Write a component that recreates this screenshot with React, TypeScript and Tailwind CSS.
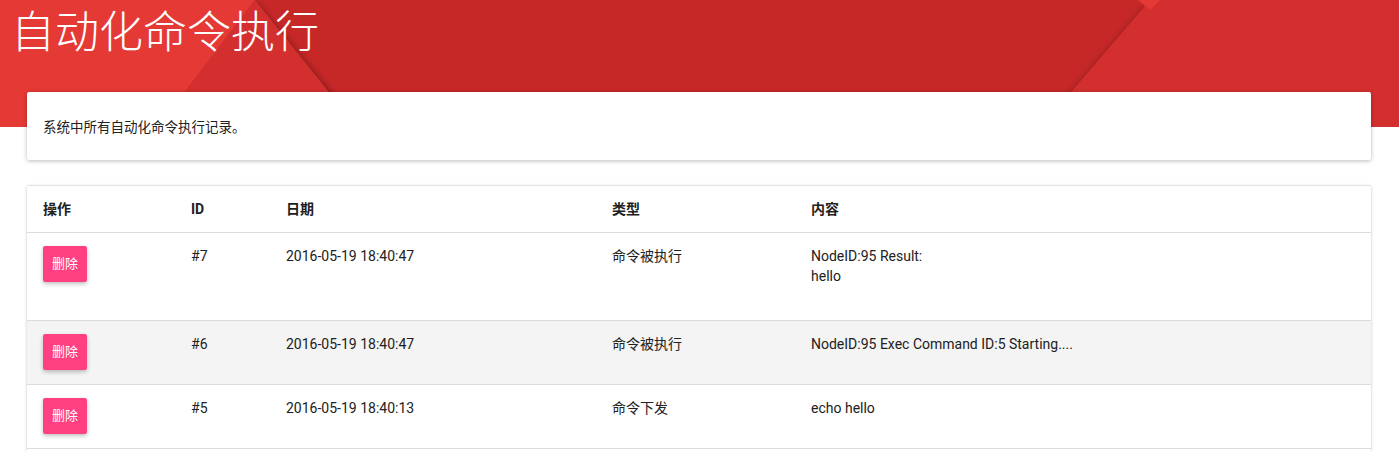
import React from 'react'

type Row = {
  id: number
  date: string
  type: string
  content: string[]
}

const rows: Row[] = [
  { id: 7, date: '2016-05-19 18:40:47', type: '命令被执行', content: ['NodeID:95 Result:', 'hello', ''] },
  { id: 6, date: '2016-05-19 18:40:47', type: '命令被执行', content: ['NodeID:95 Exec Command ID:5 Starting....'] },
  { id: 5, date: '2016-05-19 18:40:13', type: '命令下发', content: ['echo hello'] },
]

const font = { fontFamily: 'Roboto, "Noto Sans CJK SC", sans-serif' }

function HeaderBackground() {
  return (
    <svg className="absolute inset-x-0 top-0 h-[127px] w-full" viewBox="0 0 1399 127" preserveAspectRatio="none">
      <defs>
        <filter id="edge" x="-20%" y="-20%" width="140%" height="140%">
          <feGaussianBlur stdDeviation="3" />
        </filter>
      </defs>
      <rect width="1399" height="127" fill="#c62828" />
      {/* right panel */}
      <polygon points="1150,0 1399,0 1399,127 1041,127" fill="#000" opacity="0.25" filter="url(#edge)" />
      <polygon points="1150,0 1399,0 1399,127 1041,127" fill="#d32f2f" />
      <polygon points="1138,0 1160,0 1150,10" fill="#e53935" />
      {/* middle triangle */}
      <polygon points="255,0 360,127 158,127" fill="#000" opacity="0.3" filter="url(#edge)" />
      <polygon points="255,0 357,127 158,127" fill="#d32f2f" />
      {/* left panel */}
      <polygon points="0,0 255,0 158,127 0,127" fill="#e53935" />
    </svg>
  )
}

function DeleteButton() {
  return (
    <button className="h-9 w-11 rounded-[2px] bg-[#ff4081] text-[13px] text-white shadow-[0_2px_4px_rgba(0,0,0,0.25)]">
      删除
    </button>
  )
}

const cols = 'grid grid-cols-[148px_95px_326px_199px_1fr] pl-4'

export default function App() {
  return (
    <div className="relative min-h-screen bg-white text-[14px] text-[#212121]" style={font}>
      <HeaderBackground />
      <div className="relative">
        <h1 className="h-[92px] pl-[11px] pt-[4px] text-[44px] font-light leading-[58px] text-white">自动化命令执行</h1>

        <div className="pl-[27px] pr-[28px]">
          <div className="flex h-[68px] items-center rounded-[2px] bg-white px-4 pt-[3px] text-[13.5px] shadow-[0_1px_4px_rgba(0,0,0,0.28)]">
            系统中所有自动化命令执行记录。
          </div>

          <div className="mt-[25px] rounded-[2px] border-t border-[#e4e4e4] bg-white pb-10 shadow-[0_1px_3px_rgba(0,0,0,0.25)]">
            <div className={`${cols} h-[47px] items-center border-b border-[#dcdcdc] font-bold`}>
              <div>操作</div>
              <div>ID</div>
              <div>日期</div>
              <div>类型</div>
              <div>内容</div>
            </div>
            {rows.map((r, i) => (
              <div
                key={r.id}
                className={`${cols} border-b border-[#dcdcdc] pt-[13px] pb-[14px] leading-5 ${i === 1 ? 'bg-[#f4f4f4]' : ''}`}
              >
                <div>
                  <DeleteButton />
                </div>
                <div>#{r.id}</div>
                <div>{r.date}</div>
                <div>{r.type}</div>
                <div>
                  {r.content.map((line, j) => (
                    <div key={j} className="h-5">{line}</div>
                  ))}
                </div>
              </div>
            ))}
          </div>
        </div>
      </div>
    </div>
  )
}
